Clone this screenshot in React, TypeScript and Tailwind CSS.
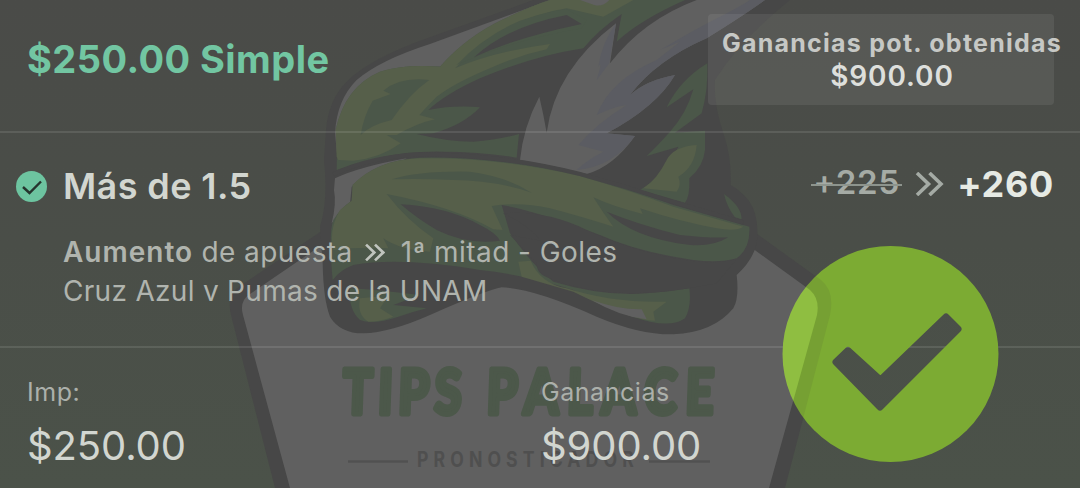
import type { ReactNode } from "react";

const DARK = "#474747";
const LIGHT = "#606060";
const OLIVE = "#565f4a";
const GREEN = "#4b5749";
const SHADE = "#5b5c62";

// The hat is drawn on its own 1350x1020 grid, three units to a pixel
function Hat() {
  return (
    <g transform="translate(320 0) scale(0.33333)">
      <path
        fill={DARK}
        d="M640 0 L330 112 Q150 175 80 245 Q25 300 18 390 L12 480 Q25 600 0 680 L8 790 Q10 900 30 950 Q60 1000 130 1000 Q210 998 330 945 Q500 870 545 862 Q640 865 830 950 Q960 1005 1060 1003 Q1180 998 1240 925 Q1258 895 1250 825 Q1310 770 1312 710 Q1315 640 1285 600 Q1260 570 1232 555 Q1235 470 1210 400 Q1180 310 1185 240 Q1260 120 1410 0Z"
      />

      {/* crown */}
      <path
        fill={LIGHT}
        d="M690 0 L330 132 Q180 180 110 240 Q50 300 45 400 L55 500 L90 400 L160 240 L270 200 L360 200 L500 90 L720 0Z"
      />
      <path
        fill={GREEN}
        d="M50 510 Q52 440 47 390 Q75 260 180 215 Q250 192 360 200 Q440 110 550 58 Q640 15 690 0 L1095 0 Q960 60 890 125 L905 42 Q835 90 790 145 Q640 168 480 235 Q380 280 325 330 Q400 315 480 322 Q430 375 340 400 L290 402 Q380 425 460 425 Q540 418 597 402 L590 473 Q480 455 370 455 Q260 453 180 473 Q110 490 50 510Z"
      />
      <path
        fill={OLIVE}
        d="M50 470 L47 390 Q75 260 180 215 Q250 192 360 200 Q440 110 550 58 Q640 15 690 0 H940 L850 50 L740 25 Q640 40 560 90 Q470 135 405 205 Q520 155 690 132 L680 148 Q600 165 520 200 Q400 250 350 290 Q320 320 298 345 L345 358 Q290 370 230 405 L200 405 L242 430 Q180 475 100 482 L55 480Z"
      />
      <path fill={LIGHT} d="M780 0 H868 Q850 20 825 16Z" />
      <path
        fill={GREEN}
        d="M122 405 Q130 350 158 302 L212 282 L190 272 Q240 230 328 240 Q270 280 215 360 Q150 375 122 405Z"
      />
      <path fill={GREEN} d="M410 195 Q490 110 600 62 Q680 35 740 28 L800 60 L785 85 Q560 125 410 195Z" />
      <path fill={DARK} d="M462 172 Q560 80 740 45 L785 72 Q580 115 462 172Z" />

      {/* feather */}
      <path
        fill={LIGHT}
        d="M600 480 Q610 380 658 290 Q670 340 680 398 Q705 210 888 70 L870 190 Q970 60 1130 0 H1335 Q1280 40 1160 115 Q1010 180 930 285 Q980 240 1065 225 Q1010 320 860 400 L945 408 Q880 500 800 522 Q700 498 600 480Z"
      />
      <path
        fill={SHADE}
        d="M1335 0 Q1280 40 1160 115 Q1010 180 930 285 Q980 240 1065 225 Q1010 320 860 400 L945 408 Q880 500 770 510 Q800 480 850 455 L775 435 Q830 370 920 315 Q880 320 830 345 Q870 240 1010 180 L1080 125 L1020 150 Q1120 90 1200 50 Q1260 20 1290 0Z"
      />
      <path fill={SHADE} d="M888 70 L868 190 L830 240 Q850 175 835 200 Q845 130 888 70Z" />

      {/* cloth under the feather */}
      <path
        fill={GREEN}
        d="M1162 190 Q1080 240 1040 322 L1120 268 Q1100 340 1050 395 Q1010 440 980 468 L1075 440 Q1040 520 960 570 L1095 608 Q1110 590 1108 535 Q1150 500 1155 450 L1155 392 L1065 398 L1145 340 Q1165 270 1162 190Z"
      />
      <path
        fill={OLIVE}
        d="M1130 435 Q1060 440 1040 480 Q1010 540 970 565 L1070 575 Q1085 555 1075 530 Q1125 500 1130 435Z"
      />
      <path fill={GREEN} d="M1212 582 Q1265 620 1265 658 L1245 652 Q1220 620 1212 582Z" />

      {/* brim */}
      <path
        fill={LIGHT}
        d="M45 535 Q120 500 260 475 L180 520 L95 560 L90 610 L35 670 Q50 610 42 570Z"
      />
      <path
        fill={GREEN}
        d="M38 840 Q25 700 40 660 Q60 625 95 602 L98 555 Q170 480 300 473 Q520 468 780 525 Q900 558 1060 615 L1288 680 Q1292 745 1250 775 Q1200 790 1120 780 Q950 755 840 705 Q640 630 545 615 L570 700 Q640 800 700 845 Q850 890 980 880 Q1050 875 1108 865 Q1115 920 1095 955 Q1060 980 990 965 Q900 945 760 870 Q620 825 480 810 Q240 770 100 795 Q60 810 38 840Z"
      />
      <path
        fill={OLIVE}
        d="M40 750 Q25 690 60 630 L95 602 L98 555 Q170 480 300 475 Q520 470 780 528 Q940 575 1060 620 L1270 680 Q1250 695 1190 685 Q1080 665 960 625 L968 642 Q880 620 820 592 Q850 640 880 680 Q750 640 690 625 Q600 605 515 618 L548 690 L520 688 Q400 620 200 582 Q260 660 340 715 L330 755 Q240 750 190 715 L205 745 Q120 740 40 750Z"
      />
      {/* seam where the brim meets the crown */}
      <path
        stroke={DARK}
        strokeWidth="13"
        fill="none"
        d="M40 523 Q150 470 300 463 Q540 462 780 522 Q920 560 1060 606 L1270 668"
      />
      <path
        fill={GREEN}
        d="M215 538 Q300 512 450 515 Q560 530 635 578 Q520 540 400 540 Q300 535 215 538Z"
      />
      <path fill={DARK} d="M242 613 Q380 620 480 675 Q530 700 540 722 Q440 735 350 690 Q290 655 242 613Z" />
      <path
        fill={DARK}
        d="M548 640 Q680 630 800 690 Q960 765 1130 785 Q1200 790 1250 778 L1190 850 L1108 865 Q860 905 690 835 Q650 825 650 790 L570 705 L662 722 Q620 670 548 640Z"
      />
      <path
        fill={DARK}
        d="M860 635 Q960 675 1080 705 Q1170 715 1225 712 Q1180 740 1110 735 Q940 715 860 635Z"
      />
      <path
        fill={OLIVE}
        d="M595 785 L632 782 Q660 850 740 865 Q880 910 1040 905 L1000 935 L1005 962 Q930 960 760 875 L605 830Z"
      />
      <path fill={LIGHT} d="M815 900 Q900 930 965 928 L980 958 Q900 950 815 900Z" />
      <path
        fill={GREEN}
        d="M90 865 Q85 930 120 960 Q160 975 235 950 Q280 935 320 925 L220 915 L300 885 Q180 870 90 865Z"
      />
      <path fill={OLIVE} d="M120 895 Q110 945 145 965 Q180 965 220 950 L180 925 L200 895 L170 890Z" />
    </g>
  );
}

function Watermark() {
  return (
    <svg
      className="absolute inset-0"
      width="1080"
      height="488"
      viewBox="0 0 1080 488"
      aria-hidden="true"
    >
      {/* shield */}
      <path
        fill={DARK}
        d="M335 222 L240 286 Q226 294 231 315 L275 488 H785 L830 315 Q835 291 821 280 L750 229Z"
      />
      <path
        fill={LIGHT}
        d="M335 236 L250 294 Q239 301 243 315 L290 488 H769 L817 315 Q820 299 810 290 L745 243Z"
      />

      <Hat />

      {/* wordmark */}
      <g
        fill="#4c584a"
        stroke="#4c584a"
        strokeWidth="5"
        strokeLinejoin="round"
        fontFamily="Lato, sans-serif"
        fontWeight="900"
        fontSize="62"
      >
        <text transform="translate(342 414) skewX(-2) scale(0.8 1)" textLength="149">
          TIPS
        </text>
        <text transform="translate(486 414) skewX(-2) scale(0.8 1)" textLength="284">
          PALACE
        </text>
      </g>
      <path stroke="#515151" strokeWidth="2.5" d="M348 461.5 H408 M649 461.5 H710" />
      <text
        transform="translate(417 466.5) scale(0.84 1)"
        fill="#4f4f4f"
        fontFamily="Inter, sans-serif"
        fontWeight="700"
        fontSize="21"
        textLength="258"
      >
        PRONOSTICADOR
      </text>
    </svg>
  );
}

function WonStamp() {
  return (
    <svg
      className="absolute left-[782px] top-[245px]"
      width="218"
      height="218"
      viewBox="782 245 218 218"
      aria-label="Ganada"
    >
      <defs>
        <mask id="tick">
          <circle cx="890.5" cy="354" r="108" fill="#fff" />
          <path
            d="M836 362 L848 350.5 L880.5 380 L946 317 L958 329 L880 407Z"
            fill="#000"
            stroke="#000"
            strokeWidth="7"
            strokeLinejoin="round"
          />
        </mask>
      </defs>
      <g mask="url(#tick)">
        <rect x="782" y="245" width="218" height="218" fill="#7cab33" />
        <path
          fill="#76a033"
          d="M750 229 L821 280 Q835 291 830 315 L785 488 H750Z"
        />
        <path
          fill="#8fbe41"
          d="M745 243 L810 290 Q820 299 817 315 L769 488 H745Z"
        />
      </g>
    </svg>
  );
}

function Chevrons({ className, stroke }: { className: string; stroke: number }) {
  return (
    <svg className={className} viewBox="0 0 28 24" fill="none" stroke="currentColor" strokeWidth={stroke}>
      <path d="M1.5 1 L13 12 L1.5 23 M14 1 L25.5 12 L14 23" />
    </svg>
  );
}

function Amount({ label, children }: { label: string; children: ReactNode }) {
  return (
    <div className="w-[514px] whitespace-nowrap">
      <div className="text-[25px] leading-[30px] tracking-[0.55px] text-[#acb0ab]">{label}</div>
      <div className="mt-[15px] text-[40px] leading-[48px] tracking-[-0.1px] text-[#d2d6d0]">
        {children}
      </div>
    </div>
  );
}

export default function App() {
  return (
    <main className="relative h-[488px] w-[1080px] overflow-hidden bg-linear-to-b from-[#4a4b48] via-[#4a4e48] to-[#4b5249] font-['Inter',sans-serif]">
      <Watermark />

      <div className="relative flex h-full flex-col">
        <header className="flex h-[133px] items-start justify-between border-b-2 border-white/10 pr-[26px] pl-[27px]">
          <h1 className="mt-[36px] text-[38px] leading-[46px] font-bold tracking-[0.45px] whitespace-nowrap text-[#72c6a2]">
            $250.00 Simple
          </h1>
          <div className="mt-[14px] flex h-[91px] w-[346px] flex-col items-center rounded-[4px] bg-white/[0.07] pt-[12px] font-bold whitespace-nowrap">
            <div className="ml-[22px] text-[25px] leading-[34px] tracking-[1.25px] text-[#c6c8c5]">
              Ganancias pot. obtenidas
            </div>
            <div className="ml-[22px] text-[28px] leading-[33px] font-semibold tracking-[0.9px] text-[#dddfdc]">
              $900.00
            </div>
          </div>
        </header>

        <section className="flex h-[215px] justify-between border-b-2 border-white/10 pr-[26px] pl-[16px]">
          <div className="flex">
            <svg className="mt-[38px] size-8" viewBox="0 0 32 32" fill="none">
              <circle cx="15.5" cy="15.5" r="15.5" fill="#6dc4a0" />
              <path d="M7 16 L13.5 22 L25 10.5" stroke="#26342e" strokeWidth="2.4" />
            </svg>
            <div className="ml-[15px] whitespace-nowrap">
              <h2 className="mt-[31px] text-[36px] leading-[44px] font-semibold tracking-[0.4px] text-[#d2d6d0]">
                Más de 1.5
              </h2>
              <p className="mt-[25px] flex items-center text-[28px] leading-[39px] tracking-[0.45px] text-[#b0b4ae]">
                <span>
                  <b className="font-semibold tracking-[1px]">Aumento</b> de apuesta
                </span>
                <Chevrons className="mx-[12px] h-[19px] w-[20px] text-[#c0c4be]" stroke={3.8} />
                <span className="ml-[4px] tracking-[0.45px]">1ª mitad - Goles</span>
              </p>
              <p className="text-[28px] leading-[39px] tracking-[0.3px] text-[#b0b4ae]">
                Cruz Azul v Pumas de la UNAM
              </p>
            </div>
          </div>
          <div className="mt-[34px] flex h-[34px] items-center font-semibold whitespace-nowrap">
            <span className="relative -top-px px-[2px] text-[33px] tracking-[0.9px] text-[#a5aba5]">
              +225
              <span className="absolute top-1/2 left-0 mt-px h-[2px] w-full bg-[#8d948d]" />
            </span>
            <Chevrons className="mr-[13px] ml-[13px] h-[24px] w-[29px] text-[#a5aba5]" stroke={3.6} />
            <span className="text-[36px] font-bold tracking-[0.7px] text-[#e6eae4]">+260</span>
          </div>
        </section>

        <footer className="flex pt-[29px] pl-[27px]">
          <Amount label="Imp:">$250.00</Amount>
          <Amount label="Ganancias">$900.00</Amount>
        </footer>
      </div>

      <WonStamp />
    </main>
  );
}
